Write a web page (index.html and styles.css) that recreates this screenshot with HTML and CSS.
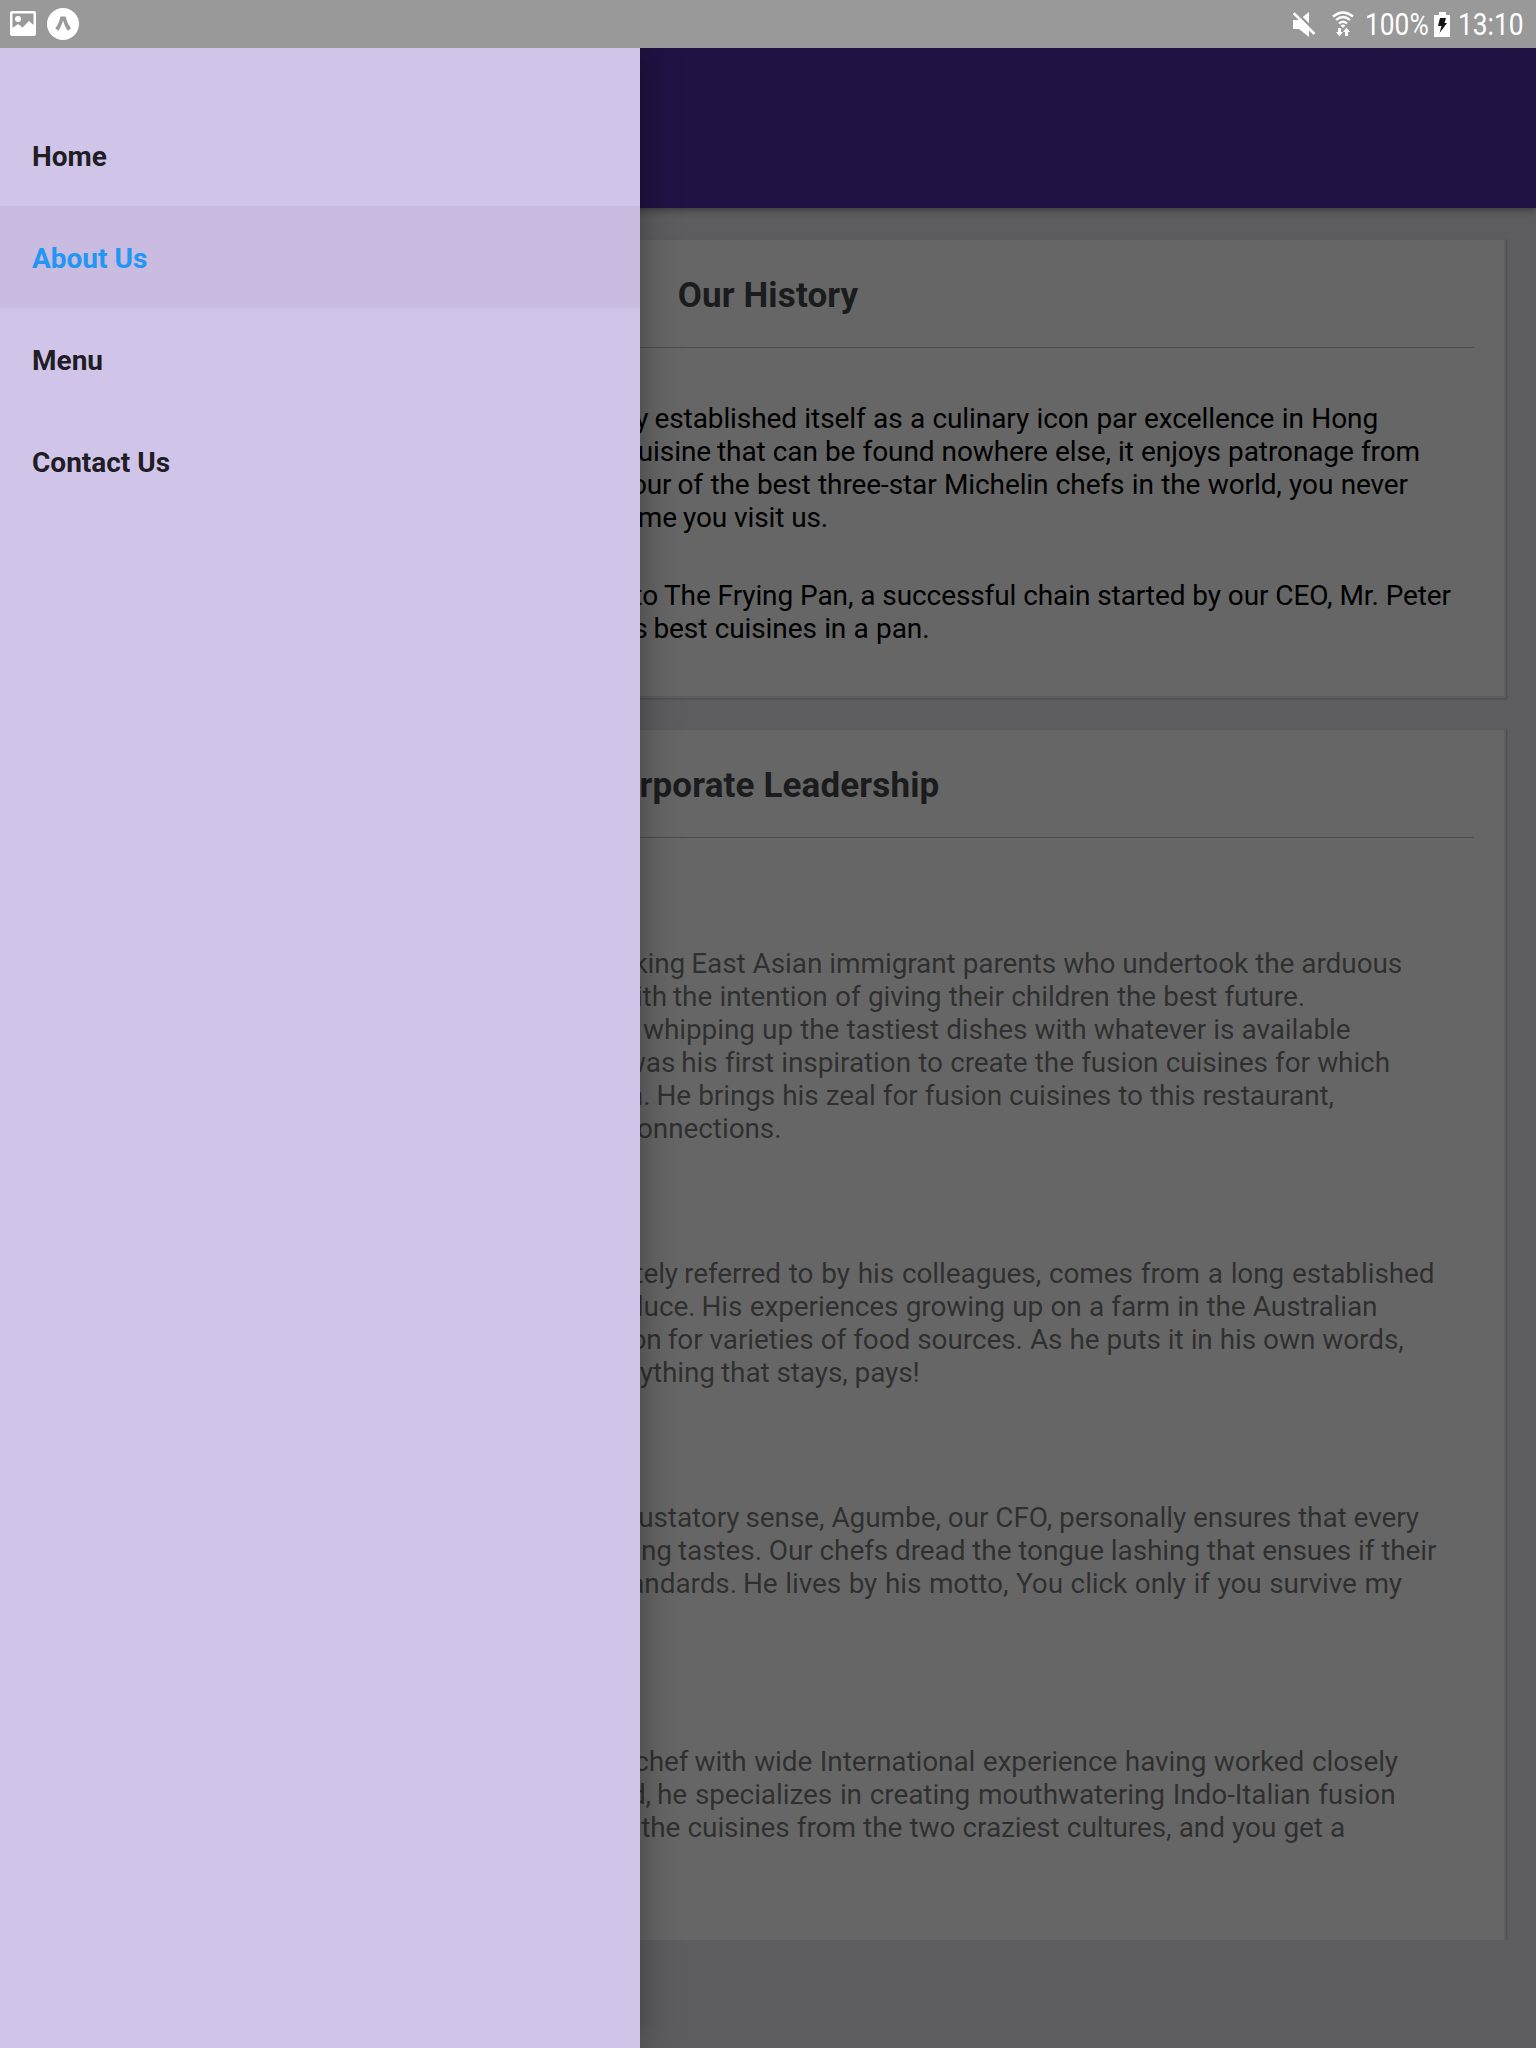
FILE: index.html
```html
<!DOCTYPE html>
<html lang="en">
<head>
<meta charset="utf-8">
<title>About Us</title>
<link rel="stylesheet" href="styles.css">
</head>
<body>
<header class="status">
  <svg class="ic-picture" width="26" height="26" viewBox="0 0 26 26"><path fill="#fff" fill-rule="evenodd" d="M2 0h22a2 2 0 0 1 2 2v21a2 2 0 0 1-2 2H2a2 2 0 0 1-2-2V2a2 2 0 0 1 2-2zM2.500 2.500V17l5.500-4 4.500 3.500 6.500-6.500 4.500 4V2.500z"/><circle cx="8" cy="8" r="3" fill="#fff"/></svg>
  <svg class="ic-expo" width="32" height="32" viewBox="0 0 32 32"><circle cx="16" cy="16" r="16" fill="#fff"/><path d="M13.500 8.500h5.200C19.500 13 21.500 17 24 20.500l-3.200 2.200C18.500 19.500 17 16 16 12.500 15 16 13.500 19.500 11.500 22.700L8.300 20.500C10.800 17 12.700 13 13.500 8.500z" fill="#999"/></svg>
  <span class="spacer"></span>
  <svg class="ic-mute" width="23" height="25" viewBox="0 0 23 25"><path fill="#fff" d="M0 8h6l10-8v25L6 17H0z"/><path d="M2-1l22 22" stroke="#999" stroke-width="2.500"/><path d="M.8 1.200 21.500 22" stroke="#fff" stroke-width="2.500"/></svg>
  <svg class="ic-wifi" width="22" height="26" viewBox="0 0 22 26"><g fill="none" stroke="#fff" stroke-width="2.300"><path d="M1 5.500Q11-2.500 21 5.500M4 9Q11 3 18 9M7 12.500Q11 9 15 12.500"/></g><path fill="#fff" d="M8.500 14.500Q11 12.500 13.500 14.500L11 17zM6 17h3v4h2l-3.500 4.500L4 21h2zM13 25h3v-4h2l-3.500-4.500L11 21h2z"/></svg>
  <span class="status-text battery-text"><span>100%</span></span>
  <svg class="ic-battery" width="16" height="25" viewBox="0 0 16 25"><path fill="#fff" d="M5 0h7v3h4v22H0V3h5z"/><path fill="#151515" d="M6 6h6l-1.500 5H13L5.500 21l2-7H4z"/></svg>
  <span class="status-text clock"><span>13:10</span></span>
</header>
<div class="screen">
  <div class="appbar"></div>
  <main class="content">
    <section class="card history">
      <h2>Our History</h2>
      <p>
        <span class="line" style="--start:592.5px;--width:723.5px"><span>quickly</span><span>established itself as a culinary icon par excellence in Hong</span></span>
        <span class="line" style="--start:655px;--width:703px"><span>cuisine</span><span>that can be found nowhere else, it enjoys patronage from</span></span>
        <span class="line" style="--start:615.5px;--width:730.5px"><span>four</span><span>of the best three-star Michelin chefs in the world, you never</span></span>
        <span class="line" style="--start:621px;--width:145px"><span>time</span><span>you visit us.</span></span>
      </p>
      <p>
        <span class="line" style="--start:602px;--width:787px"><span>to</span><span>The Frying Pan, a successful chain started by our CEO, Mr. Peter</span></span>
        <span class="line" style="--start:591.5px;--width:276px"><span>world's</span><span>best cuisines in a pan.</span></span>
      </p>
    </section>
    <section class="card leaders">
      <h2>Corporate Leadership</h2>
      <p>
        <span class="line" style="--start:629.2px;--width:711px"><span>hardworking</span><span>East Asian immigrant parents who undertook the arduous</span></span>
        <span class="line" style="--start:611px;--width:632px"><span>with</span><span>the intention of giving their children the best future.</span></span>
        <span class="line" style="--start:581px;--width:707.5px"><span></span><span>whipping up the tastiest dishes with whatever is available</span></span>
        <span class="line" style="--start:619.3px;--width:708.7px"><span>was</span><span>his first inspiration to create the fusion cuisines for which</span></span>
        <span class="line" style="--start:594.5px;--width:677.5px"><span>known.</span><span>He brings his zeal for fusion cuisines to this restaurant,</span></span>
        <span class="line" style="--start:725.5px;--width:0px"><span>connections.</span></span>
      </p>
      <p>
        <span class="line" style="--start:622px;--width:750.5px"><span>affectionately</span><span>referred to by his colleagues, comes from a long established</span></span>
        <span class="line" style="--start:639.5px;--width:676px"><span>produce.</span><span>His experiences growing up on a farm in the Australian</span></span>
        <span class="line" style="--start:605.7px;--width:736px"><span>appreciation</span><span>for varieties of food sources. As he puts it in his own words,</span></span>
        <span class="line" style="--start:659px;--width:198.5px"><span>everything</span><span>that stays, pays!</span></span>
      </p>
      <p>
        <span class="line" style="--start:683.5px;--width:673.5px"><span>gustatory</span><span>sense, Agumbe, our CFO, personally ensures that every</span></span>
        <span class="line" style="--start:616px;--width:758px"><span>exacting</span><span>tastes. Our chefs dread the tongue lashing that ensues if their</span></span>
        <span class="line" style="--start:681px;--width:659px"><span>standards.</span><span>He lives by his motto, You click only if you survive my</span></span>
      </p>
      <p>
        <span class="line" style="--start:632.5px;--width:703.5px"><span>chef</span><span>with wide International experience having worked closely</span></span>
        <span class="line" style="--start:595px;--width:738.5px"><span>world,</span><span>he specializes in creating mouthwatering Indo-Italian fusion</span></span>
        <span class="line" style="--start:579.2px;--width:704px"><span></span><span>the cuisines from the two craziest cultures, and you get a</span></span>
      </p>
    </section>
  </main>
  <div class="scrim"></div>
  <nav class="drawer">
    <a class="item">Home</a>
    <a class="item active">About Us</a>
    <a class="item">Menu</a>
    <a class="item">Contact Us</a>
  </nav>
</div>
</body>
</html>
```
FILE: styles.css
```css
* { box-sizing: border-box; }
body { margin: 0; width: 1536px; height: 2048px; overflow: hidden; display: flex; flex-direction: column; font-family: Roboto, sans-serif; font-size: 28px; line-height: 33px; }

.status { height: 48px; flex: none; display: flex; align-items: flex-start; background: #999; padding: 0 11px 0 10px; color: #fff; }
.spacer { flex: 1; }
.ic-picture { margin: 11px 11px 0 0; }
.ic-expo { margin-top: 8px; }
.ic-mute { margin: 12px 16px 0 0; }
.ic-wifi { margin: 11px 11px 0 0; }
.ic-battery { margin: 12px 8px 0 0; }
.status-text { display: block; font-size: 31px; line-height: 36px; margin-top: 7px; white-space: nowrap; }
.status-text span { display: block; transform: scaleX(.85); transform-origin: left; }
.battery-text { width: 69px; }
.clock { width: 67px; }

.screen { flex: 1; position: relative; display: flex; flex-direction: column; background: #e9e9ef; overflow: hidden; }
.appbar { height: 160px; flex: none; background: #512da8; box-shadow: 0 2px 8px rgba(0,0,0,.4); position: relative; }
.content { height: 1732px; overflow: hidden; padding: 30px; display: flex; flex-direction: column; gap: 30px; }

.card { flex: none; background: #fff; border: 2px solid #e1e8ee; padding: 0 30px; box-shadow: 1px 1px 2px rgba(0,0,0,.2); }
.card h2 { margin: 0; height: 108px; padding-top: 35px; border-bottom: 1px solid #bbb; font-size: 35px; line-height: 42px; letter-spacing: .15px; text-align: center; color: #43484d; }
.card p { margin: 0; }
.line { display: grid; grid-template-columns: var(--start) var(--width); height: 33px; white-space: nowrap; letter-spacing: -.1px; }
.line > :first-child { padding-right: 6px; text-align: right; }
.line > :last-child:not(:first-child) { text-align: justify; text-align-last: justify; }
.history { height: 460px; color: #000; }
.history h2 { margin-bottom: 54px; }
.history p { margin-bottom: 45px; }
.leaders { height: 1230px; color: rgba(0,0,0,.54); }
.leaders h2 { margin-bottom: 109px; }
.leaders p { min-height: 132px; margin-bottom: 112px; }

.scrim { position: absolute; inset: 0; background: rgba(0,0,0,.6); }
.drawer { position: absolute; left: 0; top: 0; bottom: 0; width: 640px; padding-top: 56px; background: #d1c4e9; box-shadow: 0 0 36px rgba(0,0,0,.36); }
.item { display: flex; align-items: center; height: 102px; padding: 2px 0 0 32px; font-weight: 700; color: rgba(0,0,0,.87); }
.active { color: #2196f3; background: #cabbe0; }
```
